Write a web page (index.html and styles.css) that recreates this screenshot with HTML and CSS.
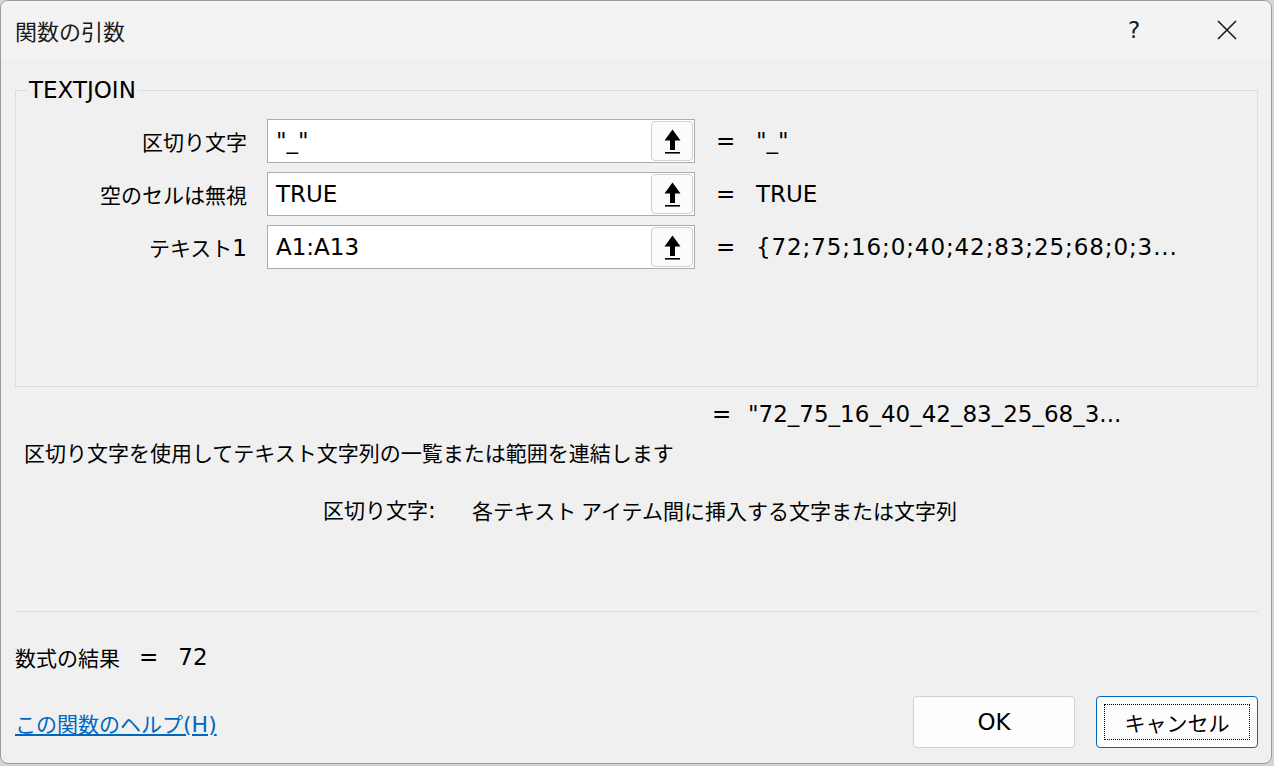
FILE: index.html
```html
<!DOCTYPE html>
<html lang="ja">
<head>
  <meta charset="UTF-8" />
  <title>関数の引数</title>
  <link rel="stylesheet" href="styles.css">
</head>
<body>
  <div class="dialog">
    <div class="titlebar">
      <span class="title">関数の引数</span>
      <span class="title-btn help lat">?</span>
      <span class="title-btn close">
        <svg width="20" height="20" viewBox="0 0 20 20"><path d="M1 1L19 19M19 1L1 19" stroke="#1a1a1a" stroke-width="1.6" fill="none"/></svg>
      </span>
    </div>

    <div class="content">
      <fieldset class="group">
        <legend class="lat">TEXTJOIN</legend>

        <div class="arg-row">
          <label>区切り文字</label>
          <div class="arg-input">
            <span class="value lat">"_"</span>
            <span class="ref-btn"><svg width="17" height="25" viewBox="0 0 17 25"><path d="M8.5 0.5L0.5 11.5H6V21H11V11.5H16.5Z" fill="#000"/><rect x="1" y="23" width="15" height="1.6" fill="#000"/></svg></span>
          </div>
          <span class="eq lat">=</span>
          <span class="arg-val lat">"_"</span>
        </div>

        <div class="arg-row">
          <label>空のセルは無視</label>
          <div class="arg-input">
            <span class="value lat">TRUE</span>
            <span class="ref-btn"><svg width="17" height="25" viewBox="0 0 17 25"><path d="M8.5 0.5L0.5 11.5H6V21H11V11.5H16.5Z" fill="#000"/><rect x="1" y="23" width="15" height="1.6" fill="#000"/></svg></span>
          </div>
          <span class="eq lat">=</span>
          <span class="arg-val lat">TRUE</span>
        </div>

        <div class="arg-row">
          <label>テキスト<span class="lat">1</span></label>
          <div class="arg-input">
            <span class="value lat">A1:A13</span>
            <span class="ref-btn"><svg width="17" height="25" viewBox="0 0 17 25"><path d="M8.5 0.5L0.5 11.5H6V21H11V11.5H16.5Z" fill="#000"/><rect x="1" y="23" width="15" height="1.6" fill="#000"/></svg></span>
          </div>
          <span class="eq lat">=</span>
          <span class="arg-val lat wide">{72;75;16;0;40;42;83;25;68;0;3...</span>
        </div>
      </fieldset>

      <div class="result-row">
        <span class="eq lat">=</span>
        <span class="arg-val lat">"72_75_16_40_42_83_25_68_3...</span>
      </div>

      <p class="desc">区切り文字を使用してテキスト文字列の一覧または範囲を連結します</p>

      <div class="arg-desc">
        <span class="arg-name">区切り文字<span class="lat">:</span></span>
        <span>各テキスト アイテム間に挿入する文字または文字列</span>
      </div>

      <hr class="sep">

      <div class="formula-result">
        <span>数式の結果</span>
        <span class="lat res-eq">=</span>
        <span class="lat res-val">72</span>
      </div>

      <div class="footer">
        <a href="#" class="help-link">この関数のヘルプ<span class="lat">(H)</span></a>
        <div class="buttons">
          <button class="btn"><span class="lat">OK</span></button>
          <button class="btn default"><span class="focus">キャンセル</span></button>
        </div>
      </div>
    </div>
  </div>
</body>
</html>
```

FILE: styles.css
```css
body {
  margin: 0;
  background: #d4d4d4;
  font-family: "Noto Sans CJK JP", "Noto Sans", sans-serif;
  font-size: 21px;
  color: #000;
}

/* latin glyphs are drawn wider than the kana in the original dialog */
.lat {
  font-family: "DejaVu Sans", "Noto Sans CJK JP", sans-serif;
  font-size: 23px;
}
.lat.wide {
  letter-spacing: 0.9px;
}

.dialog {
  width: 1270px;
  height: 762px;
  border: 1px solid #9c9c9c;
  border-radius: 8px;
  background: #f0f0f0;
  overflow: hidden;
  display: flex;
  flex-direction: column;
}

.titlebar {
  height: 57px;
  background: #f3f3f3;
  display: flex;
  align-items: center;
  padding-left: 14px;
}
.title {
  font-size: 22px;
  flex: 1;
  color: #1a1a1a;
}
.title-btn {
  display: flex;
  align-items: center;
  justify-content: center;
  width: 46px;
  height: 57px;
}
.help {
  margin-right: 47px;
  color: #1a1a1a;
}
.close {
  margin-right: 21px;
}

.content {
  flex: 1;
  padding: 0 13px 0 14px;
  display: flex;
  flex-direction: column;
}

.group {
  margin: 20px 0 0 0;
  padding: 0 0 117px 0;
  border: 1px solid #dcdcdc;
  min-width: 0;
}
.group legend {
  margin-left: 11px;
  padding: 0 2px;
  line-height: 24px;
}

.arg-row {
  display: flex;
  align-items: center;
  height: 44px;
  margin-top: 9px;
  line-height: 26px;
}
.arg-row:first-of-type {
  margin-top: 17px;
}
.arg-row label {
  width: 231px;
  text-align: right;
  margin-right: 20px;
}
.arg-input {
  width: 426px;
  height: 42px;
  border: 1px solid #ababab;
  background: #fff;
  display: flex;
  align-items: center;
}
.arg-input .value {
  flex: 1;
  padding-left: 8px;
}
.ref-btn {
  width: 42px;
  height: 40px;
  margin-right: 1px;
  border: 1px solid #d0d0d0;
  border-radius: 4px;
  background: #fbfbfb;
  display: flex;
  align-items: center;
  justify-content: center;
  box-sizing: border-box;
}
.eq {
  margin-left: 21px;
  width: 40px;
}
.result-row {
  display: flex;
  align-items: center;
  height: 26px;
  line-height: 26px;
  margin-top: 14px;
  padding-left: 697px;
}
.result-row .eq {
  margin-left: 0;
  width: 36px;
}

.desc {
  margin: 12px 0 0 9px;
  line-height: 26px;
}
.arg-desc {
  display: flex;
  align-items: center;
  margin-top: 31px;
  padding-left: 308px;
  line-height: 26px;
}
.arg-name {
  width: 149px;
}

.sep {
  margin: 88px 0 0 0;
  border: none;
  border-top: 1px solid #dcdcdc;
}

.formula-result {
  display: flex;
  align-items: center;
  margin-top: 32px;
  line-height: 26px;
  height: 26px;
}
.res-eq {
  margin-left: 19px;
}
.res-val {
  margin-left: 20px;
}

.footer {
  display: flex;
  align-items: flex-end;
  justify-content: space-between;
  margin-top: 26px;
}
.help-link {
  color: #0067c0;
  text-decoration: underline;
  margin-bottom: 10px;
  line-height: 26px;
}
.help-link .lat {
  font-size: 22px;
}
.buttons {
  display: flex;
  gap: 21px;
}
.btn {
  width: 162px;
  height: 52px;
  border: 1px solid #d0d0d0;
  border-radius: 4px;
  background: #fdfdfd;
  font-family: inherit;
  font-size: 21px;
  color: #000;
  display: flex;
  align-items: center;
  justify-content: center;
  padding: 0;
}
.btn.default {
  border: 1px solid #0067c0;
}
.btn .focus {
  display: flex;
  align-items: center;
  justify-content: center;
  width: 146px;
  height: 36px;
  border: 1px dotted #000;
  box-sizing: border-box;
}
```
